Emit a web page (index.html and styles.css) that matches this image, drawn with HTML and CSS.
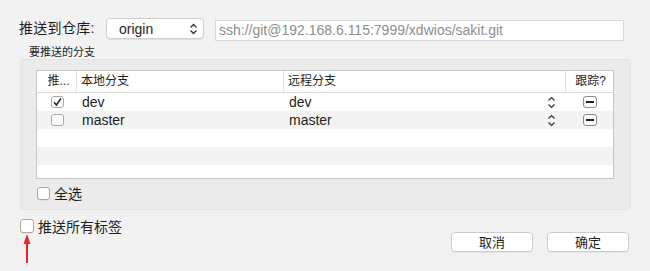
FILE: index.html
```html
<!DOCTYPE html>
<html lang="zh-CN">
<head>
    <meta charset="UTF-8">
    <title>推送</title>
    <link rel="stylesheet" href="styles.css">
</head>
<body>
    <div class="dialog">
        <!-- remote selection -->
        <div class="remote-row">
            <span class="remote-label">推送到仓库:</span>
            <div class="select">
                <span>origin</span>
                <svg class="chev" width="9" height="12" viewBox="0 0 9 12"><path d="M1.5 4.5 L4.5 1.5 L7.5 4.5 M1.5 7.5 L4.5 10.5 L7.5 7.5" fill="none" stroke="#333" stroke-width="1.3"/></svg>
            </div>
            <div class="url-field">ssh://git@192.168.6.115:7999/xdwios/sakit.git</div>
        </div>

        <div class="branches-label">要推送的分支</div>

        <div class="group">
            <div class="branch-table">
                <div class="row head">
                    <div class="cell c-push">推...</div>
                    <div class="cell c-local">本地分支</div>
                    <div class="cell c-remote">远程分支</div>
                    <div class="cell c-track">跟踪?</div>
                </div>
                <div class="row">
                    <div class="cell c-push"><span class="check on"><svg width="11" height="10" viewBox="0 0 11 10"><path d="M2 5.2 L4.4 8 L9 1.5" fill="none" stroke="#222" stroke-width="1.5"/></svg></span></div>
                    <div class="cell c-local">dev</div>
                    <div class="cell c-remote">dev
                        <svg class="stepper" width="9" height="13" viewBox="0 0 9 13"><path d="M1.5 4.5 L4.5 1.5 L7.5 4.5 M1.5 8.5 L4.5 11.5 L7.5 8.5" fill="none" stroke="#333" stroke-width="1.2"/></svg>
                    </div>
                    <div class="cell c-track"><span class="minus"></span></div>
                </div>
                <div class="row alt">
                    <div class="cell c-push"><span class="check"></span></div>
                    <div class="cell c-local">master</div>
                    <div class="cell c-remote">master
                        <svg class="stepper" width="9" height="13" viewBox="0 0 9 13"><path d="M1.5 4.5 L4.5 1.5 L7.5 4.5 M1.5 8.5 L4.5 11.5 L7.5 8.5" fill="none" stroke="#333" stroke-width="1.2"/></svg>
                    </div>
                    <div class="cell c-track"><span class="minus"></span></div>
                </div>
                <div class="row"></div>
                <div class="row alt"></div>
                <div class="row"></div>
            </div>

            <label class="check-line select-all">
                <span class="check"></span>
                <span>全选</span>
            </label>
        </div>

        <div class="footer">
            <label class="check-line tags">
                <span class="check"></span>
                <span>推送所有标签</span>
                <svg class="arrow" width="12" height="30" viewBox="0 0 12 30"><path d="M6 29 L6 8" stroke="#e8252b" stroke-width="2"/><path d="M6 0 L9.5 10 L2.5 10 Z" fill="#e8252b"/></svg>
            </label>
            <div class="buttons">
                <button class="btn">取消</button>
                <button class="btn">确定</button>
            </div>
        </div>
    </div>
</body>
</html>
```

FILE: styles.css
```css
body {
    margin: 0;
    padding: 0;
    background: #f3f2f3;
    font-family: "Liberation Sans", "Noto Sans CJK SC", sans-serif;
    color: #1e1e1e;
    font-size: 13px;
}
.dialog {
    width: 650px;
    height: 271px;
    overflow: hidden;
}
.remote-row {
    display: flex;
    align-items: flex-start;
    padding: 18px 0 0 19px;
    height: 23px;
}
.remote-label {
    width: 87px;
    font-size: 14px;
    line-height: 21px;
    letter-spacing: 0.3px;
}
.select {
    width: 98px;
    height: 21px;
    box-sizing: border-box;
    background: #fff;
    border: 1px solid #cfcfcf;
    border-radius: 4px;
    box-shadow: 0 1px 1px rgba(0, 0, 0, 0.08);
    display: flex;
    align-items: center;
    justify-content: space-between;
    padding: 0 5px 0 12px;
    font-size: 14px;
}
.url-field {
    margin: 2px 0 0 11px;
    width: 409px;
    height: 21px;
    box-sizing: border-box;
    background: #fff;
    border: 1px solid #d8d8d8;
    color: #8e8e8e;
    font-size: 14px;
    line-height: 19px;
    padding-left: 3px;
}
.branches-label {
    margin: 4px 0 0 29px;
    font-size: 11px;
    line-height: 14px;
}
.group {
    margin-left: 20px;
    width: 611px;
    height: 151px;
    box-sizing: border-box;
    background: #ebebeb;
    border: 1px solid #e3e3e3;
    border-radius: 4px;
    padding: 10px 0 0 15px;
}
.branch-table {
    width: 578px;
    height: 109px;
    box-sizing: border-box;
    border: 1px solid #c6c6c6;
    background: #fff;
    overflow: hidden;
}
.row {
    display: grid;
    grid-template-columns: 40px 207px 282px 47px;
    height: 18px;
    align-items: center;
}
.row.alt {
    background: #f3f3f3;
}
.row.head {
    height: 21px;
    border-bottom: 1px solid #d8d8d8;
}
.row.head .cell {
    border-right: 1px solid #e0e0e0;
    height: 21px;
    line-height: 21px;
    padding-left: 4px;
    font-size: 12px;
}
.row.head .cell.c-track {
    border-right: none;
    padding-left: 2px;
}
.cell {
    box-sizing: border-box;
    white-space: nowrap;
    overflow: hidden;
}
.c-local, .c-remote {
    padding-left: 5px;
    font-size: 14px;
}
.c-remote {
    display: flex;
    align-items: center;
    justify-content: space-between;
    padding-right: 10px;
}
.c-push {
    display: flex;
    justify-content: center;
}
.c-track {
    display: flex;
    justify-content: center;
}
.check {
    width: 13px;
    height: 12px;
    box-sizing: border-box;
    background: #fff;
    border: 1px solid #a9a9a9;
    border-radius: 3px;
    box-shadow: 0 1px 0 rgba(0, 0, 0, 0.06);
    display: inline-flex;
    align-items: center;
    justify-content: center;
}
.minus {
    width: 14px;
    height: 12px;
    box-sizing: border-box;
    border: 1px solid #8a8a8a;
    border-radius: 3px;
    background: #fff;
    display: inline-flex;
    align-items: center;
    justify-content: center;
}
.minus::after {
    content: "";
    width: 8px;
    height: 2px;
    background: #222;
}
.check-line {
    display: flex;
    align-items: center;
    gap: 4px;
    font-size: 14px;
}
.select-all {
    margin: 7px 0 0 1px;
    height: 14px;
}
.select-all .check {
    width: 13px;
    height: 13px;
}
.footer {
    display: flex;
    justify-content: space-between;
    align-items: flex-start;
    padding: 9px 21px 0 20px;
}
.tags {
    position: relative;
    height: 14px;
}
.tags .check {
    width: 14px;
    height: 14px;
}
.arrow {
    position: absolute;
    left: 1px;
    top: 15px;
}
.buttons {
    display: flex;
    gap: 14px;
    margin-top: 13px;
}
.btn {
    width: 82px;
    height: 20px;
    background: #fff;
    border: 1px solid #cdcdcd;
    border-radius: 4px;
    box-shadow: 0 1px 1px rgba(0, 0, 0, 0.06);
    font-family: "Noto Sans CJK SC", sans-serif;
    font-size: 13px;
    color: #1e1e1e;
    padding: 0;
    line-height: 18px;
}
```
